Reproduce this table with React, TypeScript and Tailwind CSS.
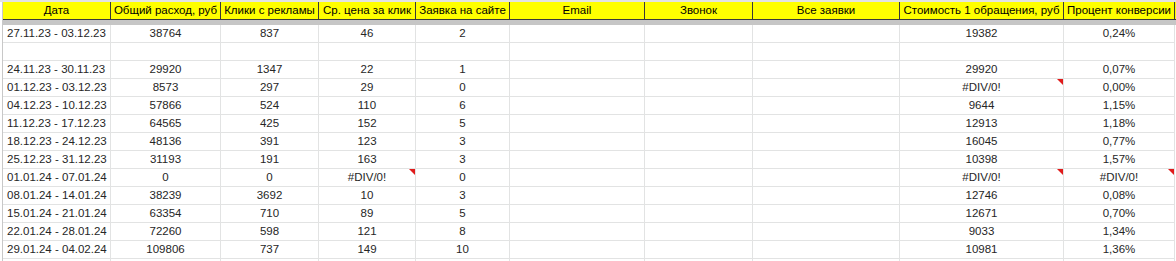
const cols = [
    "Дата",
    "Общий расход, руб",
    "Клики с рекламы",
    "Ср. цена за клик",
    "Заявка на сайте",
    "Email",
    "Звонок",
    "Все заявки",
    "Стоимость 1 обращения, руб",
    "Процент конверсии",
];

// "!" suffix on a value = cell carries a red note triangle
const rows: string[][] = [
    ["27.11.23 - 03.12.23", "38764", "837", "46", "2", "", "", "", "19382", "0,24%"],
    ["", "", "", "", "", "", "", "", "", ""],
    ["24.11.23 - 30.11.23", "29920", "1347", "22", "1", "", "", "", "29920", "0,07%"],
    ["01.12.23 - 03.12.23", "8573", "297", "29", "0", "", "", "", "#DIV/0!!", "0,00%"],
    ["04.12.23 - 10.12.23", "57866", "524", "110", "6", "", "", "", "9644", "1,15%"],
    ["11.12.23 - 17.12.23", "64565", "425", "152", "5", "", "", "", "12913", "1,18%"],
    ["18.12.23 - 24.12.23", "48136", "391", "123", "3", "", "", "", "16045", "0,77%"],
    ["25.12.23 - 31.12.23", "31193", "191", "163", "3", "", "", "", "10398", "1,57%"],
    ["01.01.24 - 07.01.24", "0", "0", "#DIV/0!!", "0", "", "", "", "#DIV/0!!", "#DIV/0!!"],
    ["08.01.24 - 14.01.24", "38239", "3692", "10", "3", "", "", "", "12746", "0,08%"],
    ["15.01.24 - 21.01.24", "63354", "710", "89", "5", "", "", "", "12671", "0,70%"],
    ["22.01.24 - 28.01.24", "72260", "598", "121", "8", "", "", "", "9033", "1,34%"],
    ["29.01.24 - 04.02.24", "109806", "737", "149", "10", "", "", "", "10981", "1,36%"],
    ["", "", "", "", "", "", "", "", "", ""],
];

const gridCols = "grid grid-cols-[108px_110px_98px_97px_94px_135px_108px_147px_164px_111px]";

const App = () => {
    return (
        <div className="w-[1176px] h-[261px] overflow-hidden bg-white font-['Liberation_Sans',Arial,sans-serif] text-[11.5px] leading-none">
            <div className="h-[2px] bg-[#e3e3e3]" />
            <div className="ml-[2px] border-l border-[#c8c8c8]">
                {/* Header */}
                <div className={`${gridCols} h-[18px] bg-[#ffff00] border-b border-[#3a3a3a]`}>
                    {cols.map((c) => (
                        <div key={c} className="flex items-center justify-center pt-[1px] border-r border-[#3a3a3a] text-black whitespace-nowrap overflow-hidden">
                            {c}
                        </div>
                    ))}
                </div>
                {/* Freeze bar */}
                <div className="h-[5px] bg-[#c6c6c6]" />
                {/* Rows */}
                {rows.map((r, i) => (
                    <div key={i} className={`${gridCols} h-[18px]`}>
                        {r.map((v, j) => {
                            const note = v.endsWith("!!");
                            const text = note ? v.slice(0, -1) : v;
                            return (
                                <div
                                    key={j}
                                    className={`relative flex items-center border-r border-b border-[#e2e3e3] text-[#262626] whitespace-nowrap ${j === 0 ? "justify-start pl-[4px]" : "justify-center"}`}
                                >
                                    {text}
                                    {note && (
                                        <span className="absolute top-0 right-0 w-0 h-0 border-t-[6px] border-l-[6px] border-t-[#e01b1b] border-l-transparent" />
                                    )}
                                </div>
                            );
                        })}
                    </div>
                ))}
            </div>
        </div>
    );
};

export default App;
